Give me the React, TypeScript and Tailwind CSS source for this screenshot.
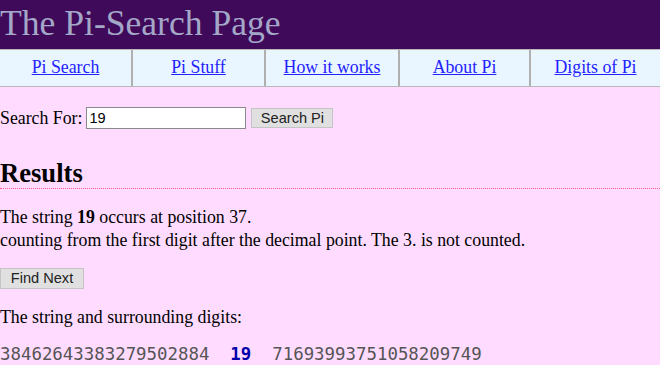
export default function App() {
  const links = [
    { label: "Pi Search", w: "w-[133px]" },
    { label: "Pi Stuff", w: "w-[133px]" },
    { label: "How it works", w: "w-[134px]" },
    { label: "About Pi", w: "w-[131px]" },
    { label: "Digits of Pi", w: "w-[129px]" },
  ];
  const serif = { fontFamily: '"Liberation Serif", "Times New Roman", serif' };
  const sans = { fontFamily: '"Liberation Sans", Arial, sans-serif' };
  return (
    <div className="w-[660px] h-[365px] overflow-hidden bg-[#ffdcff] text-[17.8px] text-black" style={serif}>
      {/* Title bar */}
      <div className="h-[49px] bg-[#400a5a] flex items-center">
        <h1 className="text-[35.6px] leading-[40px] text-[#a4a8c8] font-normal pb-[3px]">The Pi-Search Page</h1>
      </div>

      {/* Nav */}
      <div className="flex h-[38px] bg-[#eaf6ff] border-y border-[#b8b8b8]">
        {links.map((l, i) => (
          <div
            key={l.label}
            className={
              l.w + " flex items-center justify-center " + (i < links.length - 1 ? "border-r-2 border-[#b0b0b0]" : "")
            }
          >
            <a href="#" className="text-[#2222ff] underline leading-none">
              {l.label}
            </a>
          </div>
        ))}
      </div>

      {/* Search */}
      <div className="flex items-center mt-[20px] h-[22px]">
        <span>Search For:</span>
        <input
          defaultValue="19"
          className="ml-[4px] w-[160px] h-[22px] bg-white border border-[#8a8a8a] px-[2px] text-[14.6px] outline-none"
          style={sans}
        />
        <button
          className="ml-[5px] w-[82px] h-[20px] bg-[#e0e0e0] border border-[#c4c4c4] text-[14.6px] text-[#222] leading-none"
          style={sans}
        >
          Search Pi
        </button>
      </div>

      {/* Results */}
      <h2 className="mt-[29px] text-[26.6px] font-bold leading-[30px]">Results</h2>
      <div className="h-0 border-t border-dotted border-[#ff5a82]" />

      <div className="mt-[17px] leading-[23px]">
        <div>
          The string <b>19</b> occurs at position 37.
        </div>
        <div>counting from the first digit after the decimal point. The 3. is not counted.</div>
      </div>

      <button
        className="mt-[16px] block w-[84px] h-[21px] bg-[#e0e0e0] border border-[#c4c4c4] text-[14.6px] text-[#222] leading-none"
        style={sans}
      >
        Find Next
      </button>

      <div className="mt-[17px] leading-[23px]">The string and surrounding digits:</div>

      <div
        className="mt-[14px] whitespace-pre text-[17.4px] leading-[23px] text-[#555]"
        style={{ fontFamily: '"DejaVu Sans Mono", "Liberation Mono", monospace' }}
      >
        38462643383279502884  <b className="text-[#0000aa]">19</b>  71693993751058209749
      </div>
    </div>
  );
}
